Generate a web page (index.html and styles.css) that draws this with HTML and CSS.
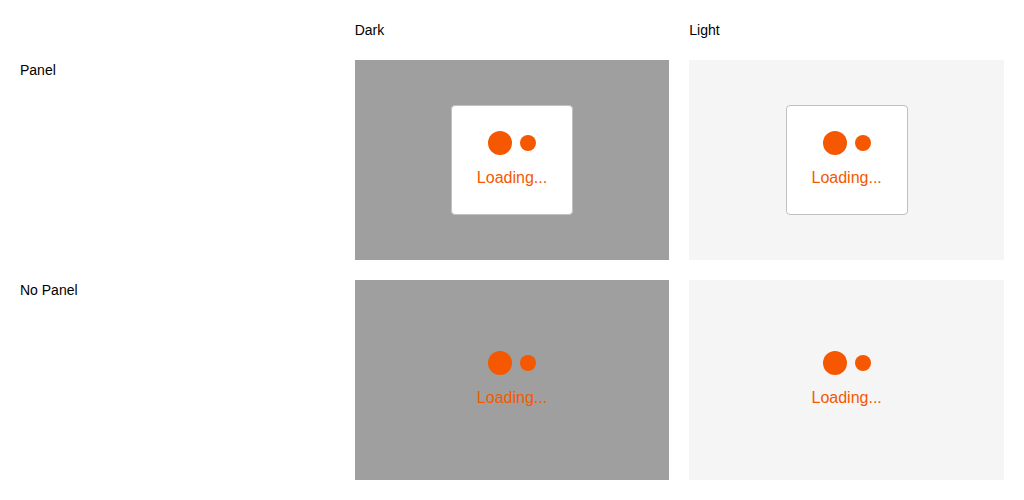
FILE: index.html
```
<!DOCTYPE html>
<html lang="en">
<head>
<meta charset="utf-8">
<title>Loader</title>
<link rel="stylesheet" href="styles.css">
</head>
<body>
<main class="grid">
  <div class="label column-dark">Dark</div>
  <div class="label">Light</div>

  <div class="label">Panel</div>
  <div class="stage dark"><div class="loader panel" role="status"><div class="dots"><span class="dot large"></span><span class="dot small"></span></div><div class="loader-text">Loading...</div></div></div>
  <div class="stage light"><div class="loader panel" role="status"><div class="dots"><span class="dot large"></span><span class="dot small"></span></div><div class="loader-text">Loading...</div></div></div>

  <div class="label">No Panel</div>
  <div class="stage dark"><div class="loader" role="status"><div class="dots"><span class="dot large"></span><span class="dot small"></span></div><div class="loader-text">Loading...</div></div></div>
  <div class="stage light"><div class="loader" role="status"><div class="dots"><span class="dot large"></span><span class="dot small"></span></div><div class="loader-text">Loading...</div></div></div>
</main>
</body>
</html>
```
FILE: styles.css
```
* {
  box-sizing: border-box;
}

body {
  margin: 0;
  background: #fff;
  color: #000;
  font: 14px/20px "Liberation Sans", Arial, sans-serif;
}

.grid {
  display: grid;
  grid-template-columns: repeat(3, 1fr);
  gap: 20px;
  padding: 20px;
}

.column-dark {
  grid-column: 2;
}

.stage {
  display: flex;
  align-items: center;
  justify-content: center;
  min-height: 200px;
}

.dark {
  background: #9f9f9f;
}

.light {
  background: #f5f5f5;
}

.loader {
  min-width: 122px;
  padding: 24px;
  border: 1px solid transparent;
  border-radius: 4px;
  color: #f55800;
  font-size: 16px;
  line-height: 24px;
  text-align: center;
}

.panel {
  background: #fff;
  border-color: #c0c0c0;
}

.dots {
  display: flex;
  align-items: center;
  justify-content: center;
  gap: 8px;
  height: 26px;
  margin-bottom: 10px;
}

.dot {
  border-radius: 50%;
  background: #f55800;
}

.large {
  width: 24px;
  height: 24px;
}

.small {
  width: 16px;
  height: 16px;
}
```
